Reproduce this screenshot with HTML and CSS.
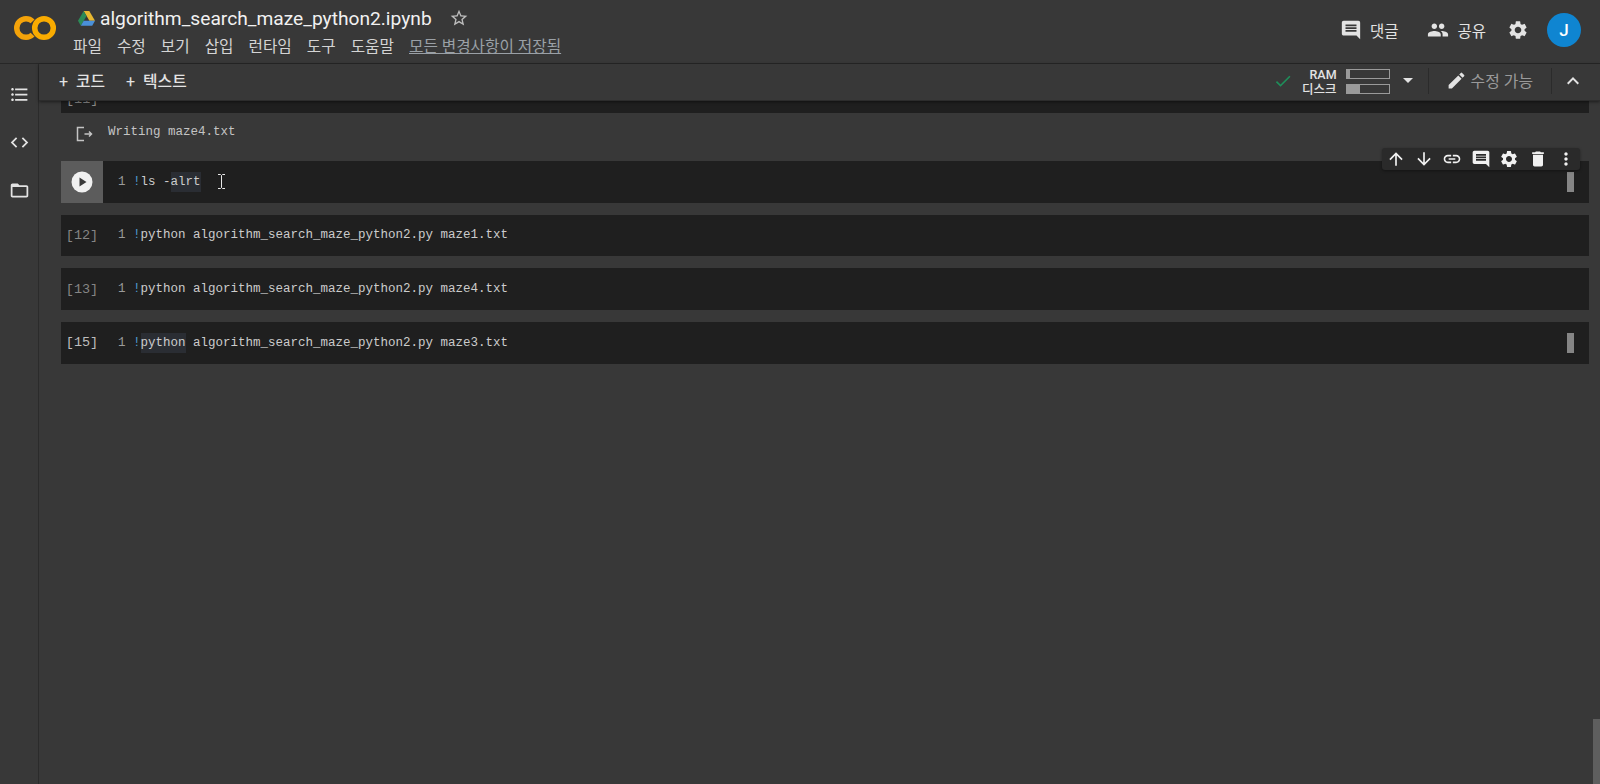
FILE: index.html
```html
<!DOCTYPE html>
<html lang="ko">
<head>
<meta charset="utf-8">
<title>algorithm_search_maze_python2.ipynb - Colaboratory</title>
<link rel="stylesheet" href="styles.css">
</head>
<body>
<div class="app">
  <header class="header">
    <svg class="logo" width="44" height="28" viewBox="0 0 44 28"><circle cx="31" cy="14" r="9.300" class="ring"/><path d="M19.600 7.400a9.300 9.300 0 1 0 0 13.200" class="ring ring-c"/></svg>
    <div class="doc">
      <div class="title-row">
        <svg class="drive" width="17" height="15" viewBox="0 0 17 15"><path d="M5.700 0h5.600l5.700 9.800h-5.600z" fill="#e8b730"/><path d="M5.700 0L0 9.800l2.800 4.900 5.700-9.800z" fill="#2c8a57"/><path d="M2.800 14.700h11.400l2.800-4.900H5.700z" fill="#4a90d9"/></svg>
        <span class="title">algorithm_search_maze_python2.ipynb</span>
        <svg class="star" width="20" height="20" viewBox="0 0 24 24"><path d="M22 9.240l-7.190-.62L12 2 9.190 8.630 2 9.240l5.460 4.730L5.820 21 12 17.270 18.180 21l-1.630-7.030L22 9.240zM12 15.400l-3.760 2.270 1-4.280-3.320-2.880 4.380-.38L12 6.100l1.710 4.040 4.380.38-3.320 2.880 1 4.280L12 15.400z"/></svg>
      </div>
      <nav class="menu">
        <span>파일</span><span>수정</span><span>보기</span><span>삽입</span><span>런타임</span><span>도구</span><span>도움말</span><span class="saved">모든 변경사항이 저장됨</span>
      </nav>
    </div>
    <div class="actions">
      <span class="action action-first"><svg width="22" height="22" viewBox="0 0 24 24"><path d="M21.990 4c0-1.100-.89-2-1.990-2H4c-1.100 0-2 .9-2 2v12c0 1.100.9 2 2 2h14l4 4-.01-18zM18 14H6v-2h12v2zm0-3H6V9h12v2zm0-3H6V6h12v2z"/></svg><span>댓글</span></span>
      <span class="action"><svg width="22" height="22" viewBox="0 0 24 24"><path d="M16 11c1.660 0 2.990-1.340 2.990-3S17.660 5 16 5s-3 1.340-3 3 1.340 3 3 3zm-8 0c1.660 0 2.990-1.340 2.990-3S9.660 5 8 5 5 6.340 5 8s1.340 3 3 3zm0 2c-2.330 0-7 1.170-7 3.500V19h14v-2.500c0-2.330-4.670-3.500-7-3.500zm8 0c-.29 0-.62.020-.97.050 1.160.84 1.970 1.970 1.970 3.450V19h6v-2.500c0-2.330-4.670-3.500-7-3.500z"/></svg><span>공유</span></span>
      <svg class="gear" width="22" height="22" viewBox="0 0 24 24"><path d="M19.140 12.940c.04-.3.060-.61.060-.94 0-.32-.02-.64-.07-.94l2.030-1.580a.49.490 0 0 0 .12-.61l-1.920-3.320a.488.488 0 0 0-.59-.22l-2.390.96c-.5-.38-1.030-.7-1.620-.94l-.36-2.540a.484.484 0 0 0-.48-.41h-3.840c-.24 0-.43.170-.47.41l-.36 2.540c-.59.240-1.130.57-1.620.94l-2.390-.96c-.22-.08-.47 0-.59.220L2.740 8.870c-.12.210-.08.470.12.610l2.030 1.580c-.05.300-.09.630-.09.940s.02.640.07.940l-2.030 1.580a.49.490 0 0 0-.12.610l1.920 3.320c.12.220.37.290.59.220l2.390-.96c.5.380 1.030.7 1.620.94l.36 2.540c.05.240.24.410.48.410h3.840c.24 0 .44-.17.47-.41l.36-2.540c.59-.24 1.130-.56 1.620-.94l2.390.96c.22.080.47 0 .59-.22l1.920-3.320c.12-.22.07-.47-.12-.61l-2.010-1.580zM12 15.600c-1.980 0-3.600-1.620-3.600-3.600s1.620-3.600 3.600-3.600 3.600 1.620 3.600 3.600-1.620 3.600-3.600 3.600z"/></svg>
      <span class="avatar">J</span>
    </div>
  </header>

  <div class="main">
    <aside class="sidebar">
      <svg width="24" height="24" viewBox="0 0 24 24"><path d="M4 10.500c-.83 0-1.500.67-1.500 1.500s.67 1.500 1.500 1.500 1.500-.67 1.500-1.500-.67-1.500-1.500-1.500zm0-6c-.83 0-1.500.67-1.500 1.500S3.170 7.500 4 7.500 5.500 6.830 5.500 6 4.830 4.500 4 4.500zm0 12c-.83 0-1.500.68-1.500 1.500s.68 1.500 1.500 1.500 1.500-.68 1.500-1.500-.67-1.500-1.500-1.500zM7 19h14v-2H7v2zm0-6h14v-2H7v2zm0-8v2h14V5H7z"/></svg>
      <svg width="24" height="24" viewBox="0 0 24 24"><path d="M9.400 16.600L4.800 12l4.600-4.600L8 6l-6 6 6 6 1.400-1.400zm5.200 0l4.600-4.600-4.600-4.600L16 6l6 6-6 6-1.400-1.400z"/></svg>
      <svg width="24" height="24" viewBox="0 0 24 24"><path d="M20 6h-8l-2-2H4c-1.100 0-1.990.9-1.990 2L2 18c0 1.100.9 2 2 2h16c1.100 0 2-.9 2-2V8c0-1.100-.9-2-2-2zm0 12H4V8h16v10z"/></svg>
    </aside>
    <div class="workspace">
      <div class="toolbar">
        <div class="add"><span><b>+</b> 코드</span><span><b>+</b> 텍스트</span></div>
        <div class="status">
          <svg class="check" width="20" height="20" viewBox="0 0 24 24"><path d="M9 16.170L4.830 12l-1.420 1.410L9 19 21 7l-1.410-1.410z"/></svg>
          <div class="labels"><span>RAM</span><span>디스크</span></div>
          <div class="meters"><span class="meter"><i class="ram"></i></span><span class="meter"><i class="disk"></i></span></div>
          <span class="caret"></span>
          <span class="vsep"></span>
          <svg class="pencil" width="21" height="21" viewBox="0 0 24 24"><path d="M3 17.250V21h3.750L17.810 9.940l-3.750-3.750L3 17.250zM20.710 7.040a1 1 0 0 0 0-1.410l-2.340-2.340a1 1 0 0 0-1.410 0l-1.830 1.830 3.750 3.750 1.830-1.830z"/></svg>
          <span class="editable">수정 가능</span>
          <span class="vsep vsep-b"></span>
          <svg class="chev" width="24" height="24" viewBox="0 0 24 24"><path d="M7.410 15.410L12 10.830l4.590 4.580L18 14l-6-6-6 6z"/></svg>
        </div>
      </div>
      <div class="notebook">
        <div class="cell cut"><span class="cut-label">[11]</span></div>
        <div class="output">
          <svg class="out-icon" width="20" height="20" viewBox="0 0 20 20"><path d="M10 3.500H3.500v13H10M10.500 10h7M15 7.500l2.500 2.500-2.500 2.500"/></svg>
          <code>Writing maze4.txt</code>
        </div>
        <div class="cell active">
          <div class="gutter run"><span class="play"><svg width="22" height="22" viewBox="0 0 22 22"><circle cx="11" cy="11" r="10.500" fill="#f1f1f1"/><path d="M8.500 6.500l7 4.500-7 4.500z" fill="#3a3a3a"/></svg></span></div>
          <code class="line"><span class="num">1</span><span class="bang">!</span>ls -<span class="hl">alrt</span></code>
          <svg class="ibeam" width="9" height="15" viewBox="0 0 9 15"><path d="M1 .5h2.500l1 1 1-1H8M4.500 1.500v12M1 14.500h2.500l1-1 1 1H8"/></svg>
          <span class="mark"></span>
          <div class="cell-tools">
            <svg width="24" height="24" viewBox="0 0 24 24"><path d="M4 12l1.410 1.410L11 7.830V20h2V7.830l5.580 5.590L20 12l-8-8-8 8z"/></svg>
            <svg width="24" height="24" viewBox="0 0 24 24"><path d="M20 12l-1.410-1.410L13 16.170V4h-2v12.170l-5.580-5.590L4 12l8 8 8-8z"/></svg>
            <svg width="24" height="24" viewBox="0 0 24 24"><path d="M3.900 12c0-1.710 1.390-3.100 3.100-3.100h4V7H7c-2.760 0-5 2.240-5 5s2.240 5 5 5h4v-1.900H7c-1.710 0-3.100-1.390-3.100-3.100zM8 13h8v-2H8v2zm9-6h-4v1.900h4c1.710 0 3.100 1.390 3.100 3.100s-1.390 3.100-3.100 3.100h-4V17h4c2.760 0 5-2.240 5-5s-2.240-5-5-5z"/></svg>
            <svg width="24" height="24" viewBox="0 0 24 24"><path d="M21.990 4c0-1.100-.89-2-1.990-2H4c-1.100 0-2 .9-2 2v12c0 1.100.9 2 2 2h14l4 4-.01-18zM18 14H6v-2h12v2zm0-3H6V9h12v2zm0-3H6V6h12v2z"/></svg>
            <svg width="24" height="24" viewBox="0 0 24 24"><path d="M19.140 12.940c.04-.3.060-.61.060-.94 0-.32-.02-.64-.07-.94l2.030-1.580a.49.490 0 0 0 .12-.61l-1.920-3.320a.488.488 0 0 0-.59-.22l-2.390.96c-.5-.38-1.030-.7-1.620-.94l-.36-2.540a.484.484 0 0 0-.48-.41h-3.840c-.24 0-.43.170-.47.41l-.36 2.540c-.59.240-1.130.57-1.620.94l-2.390-.96c-.22-.08-.47 0-.59.220L2.740 8.870c-.12.210-.08.470.12.610l2.030 1.580c-.05.300-.09.630-.09.940s.02.640.07.940l-2.030 1.580a.49.490 0 0 0-.12.610l1.920 3.320c.12.220.37.290.59.220l2.390-.96c.5.380 1.030.7 1.620.94l.36 2.540c.05.240.24.410.48.410h3.840c.24 0 .44-.17.47-.41l.36-2.540c.59-.24 1.130-.56 1.620-.94l2.390.96c.22.080.47 0 .59-.22l1.920-3.320c.12-.22.07-.47-.12-.61l-2.010-1.580zM12 15.600c-1.980 0-3.600-1.620-3.600-3.600s1.620-3.600 3.600-3.600 3.600 1.620 3.600 3.600-1.620 3.600-3.600 3.600z"/></svg>
            <svg width="24" height="24" viewBox="0 0 24 24"><path d="M6 19c0 1.100.9 2 2 2h8c1.100 0 2-.9 2-2V7H6v12zM19 4h-3.500l-1-1h-5l-1 1H5v2h14V4z"/></svg>
            <svg width="24" height="24" viewBox="0 0 24 24"><path d="M12 8c1.100 0 2-.9 2-2s-.9-2-2-2-2 .9-2 2 .9 2 2 2zm0 2c-1.100 0-2 .9-2 2s.9 2 2 2 2-.9 2-2-.9-2-2-2zm0 6c-1.100 0-2 .9-2 2s.9 2 2 2 2-.9 2-2-.9-2-2-2z"/></svg>
          </div>
        </div>
        <div class="cell">
          <div class="gutter dim">[12]</div>
          <code class="line"><span class="num">1</span><span class="bang">!</span>python algorithm_search_maze_python2.py maze1.txt</code>
        </div>
        <div class="cell">
          <div class="gutter dim">[13]</div>
          <code class="line"><span class="num">1</span><span class="bang">!</span>python algorithm_search_maze_python2.py maze4.txt</code>
        </div>
        <div class="cell">
          <div class="gutter">[15]</div>
          <code class="line"><span class="num">1</span><span class="bang">!</span><span class="hl">python</span> algorithm_search_maze_python2.py maze3.txt</code>
          <span class="mark"></span>
        </div>
      </div>
    </div>
  </div>
  <span class="thumb"></span>
</div>
</body>
</html>
```

FILE: styles.css
```css
* { box-sizing: border-box; }
html, body { margin: 0; height: 100%; overflow: hidden; }
body {
  background: #383838;
  color: #e8e8e8;
  font-family: Roboto, "Noto Sans CJK KR", sans-serif;
}
svg { display: block; fill: currentColor; flex: none; }
code { font-family: "Liberation Mono", "DejaVu Sans Mono", monospace; font-size: 12.500px; }
.app { position: relative; height: 784px; display: flex; flex-direction: column; }

.header {
  height: 64px;
  flex: none;
  display: flex;
  align-items: flex-start;
  border-bottom: 1px solid #272727;
}
.logo { margin: 14px 0 0 13px; }
.ring { fill: none; stroke: #f9ab00; stroke-width: 5.500; }
.ring-c { stroke: #f4a30a; }
.doc { margin-left: 15px; padding-top: 7px; }
.title-row { display: flex; align-items: center; height: 22px; margin-left: 6px; }
.drive { margin-right: 5px; }
.title { font-size: 19.200px; color: #f1f1f1; }
.star { margin-left: 17px; fill: #bdbdbd; }
.menu {
  display: flex;
  gap: 15px;
  margin: 7px 0 0 1px;
  font-size: 15.700px;
  line-height: 22px;
  color: #d4d4d4;
}
.saved { color: #9aa0a6; text-decoration: underline; }
.actions {
  margin-left: auto;
  display: flex;
  align-items: center;
  height: 60px;
  padding-right: 19px;
  color: #e3e3e3;
}
.action { display: flex; align-items: center; gap: 8px; font-size: 15.500px; margin-right: 21px; }
.action-first { margin-right: 29px; }
.gear { margin-right: 18px; }
.avatar {
  width: 34px;
  height: 34px;
  border-radius: 50%;
  background: #0f85d1;
  color: #fff;
  font-size: 17px;
  font-weight: 500;
  display: flex;
  align-items: center;
  justify-content: center;
}

.main { flex: 1; display: flex; min-height: 0; }
.sidebar {
  width: 39px;
  flex: none;
  border-right: 1px solid #2b2b2b;
  display: flex;
  flex-direction: column;
  align-items: center;
  gap: 27px;
  padding-top: 20px;
  color: #e3e3e3;
}
.sidebar svg { width: 21px; height: 21px; }
.workspace { flex: 1; min-width: 0; display: flex; flex-direction: column; }
.toolbar {
  height: 37px;
  flex: none;
  display: flex;
  align-items: center;
  justify-content: space-between;
  box-shadow: 0 1px 3px rgba(0,0,0,.5);
  border-bottom: 1px solid #2c2c2c;
  position: relative;
  z-index: 2;
  background: #383838;
  padding-bottom: 3px;
}
.add { display: flex; gap: 21px; margin-left: 20px; font-size: 15.800px; font-weight: 500; color: #e3e3e3; }
.add b { font-weight: 400; font-size: 16px; margin-right: 4px; }
.status { display: flex; align-items: center; height: 30px; }
.check { fill: #1e8e5a; margin-right: 9px; }
.labels { display: flex; flex-direction: column; align-items: flex-end; font-size: 12.500px; line-height: 15px; font-weight: 500; color: #e3e3e3; padding-top: 2px; }
.meters { display: flex; flex-direction: column; gap: 5px; margin-left: 9px; padding-top: 2px; }
.meter { display: block; width: 44px; height: 10px; border: 1px solid #9a9a9a; }
.meter i { display: block; height: 100%; background: #9a9a9a; }
.ram { width: 3px; }
.disk { width: 13px; }
.caret { width: 0; height: 0; border: 5px solid transparent; border-top-color: #e3e3e3; border-bottom: 0; margin-left: 13px; }
.vsep { width: 1px; height: 26px; background: #2b2b2b; margin-left: 15px; }
.pencil { margin-left: 17px; color: #e3e3e3; }
.editable { font-size: 15.900px; color: #9a9a9a; margin-left: 4px; }
.vsep-b { margin-left: 18px; }
.chev { margin: 0 15px 0 9px; color: #e3e3e3; }

.notebook { flex: 1; padding: 0 11px 0 22px; min-height: 0; }
.cell {
  position: relative;
  display: flex;
  align-items: center;
  height: 41.670px;
  margin-bottom: 12px;
  background: #1f1f1f;
}
.cell.cut { height: 12px; margin-bottom: 0; overflow: hidden; align-items: flex-start; }
.cut-label { font: 13.500px "Liberation Mono", monospace; color: #8a8a8a; margin: -9px 0 0 5px; }
.output { height: 48px; display: flex; align-items: center; gap: 14px; padding: 0 0 10px 13px; }
.output code { color: #c4c4c4; }
.out-icon { fill: none; stroke: #c4c4c4; stroke-width: 1.500; margin-top: 4px; }
.gutter {
  width: 42px;
  flex: none;
  height: 100%;
  display: flex;
  align-items: center;
  justify-content: center;
  font: 13.500px "Liberation Mono", monospace;
  color: #bdbdbd;
}
.gutter.dim { color: #858585; }
.gutter.run { background: #5c5c5c; }
.play { display: block; }
.line { color: #cccccc; padding-left: 15px; white-space: pre; }
.num { color: #9a9a9a; display: inline-block; width: 15px; }
.bang { color: #4f9bd0; }
.hl { background: #2a2d33; padding: 3px 0; }
.ibeam { fill: none; stroke: #e8e8e8; margin-left: 16px; }
.mark { position: absolute; right: 15px; top: 50%; margin-top: -10px; width: 7px; height: 20px; background: #858585; }
.cell-tools {
  position: absolute;
  right: 9px;
  top: -13px;
  height: 22px;
  display: flex;
  align-items: center;
  gap: 8.400px;
  padding: 0 4px 0 4px;
  background: #2a2a2a;
  border-radius: 3px;
  box-shadow: 0 1px 3px rgba(0,0,0,.4);
  color: #f1f1f1;
}
.cell-tools svg { width: 20px; height: 20px; }
.thumb { position: absolute; right: 0; bottom: 0; width: 7px; height: 65px; background: #5e5e5e; }
```
